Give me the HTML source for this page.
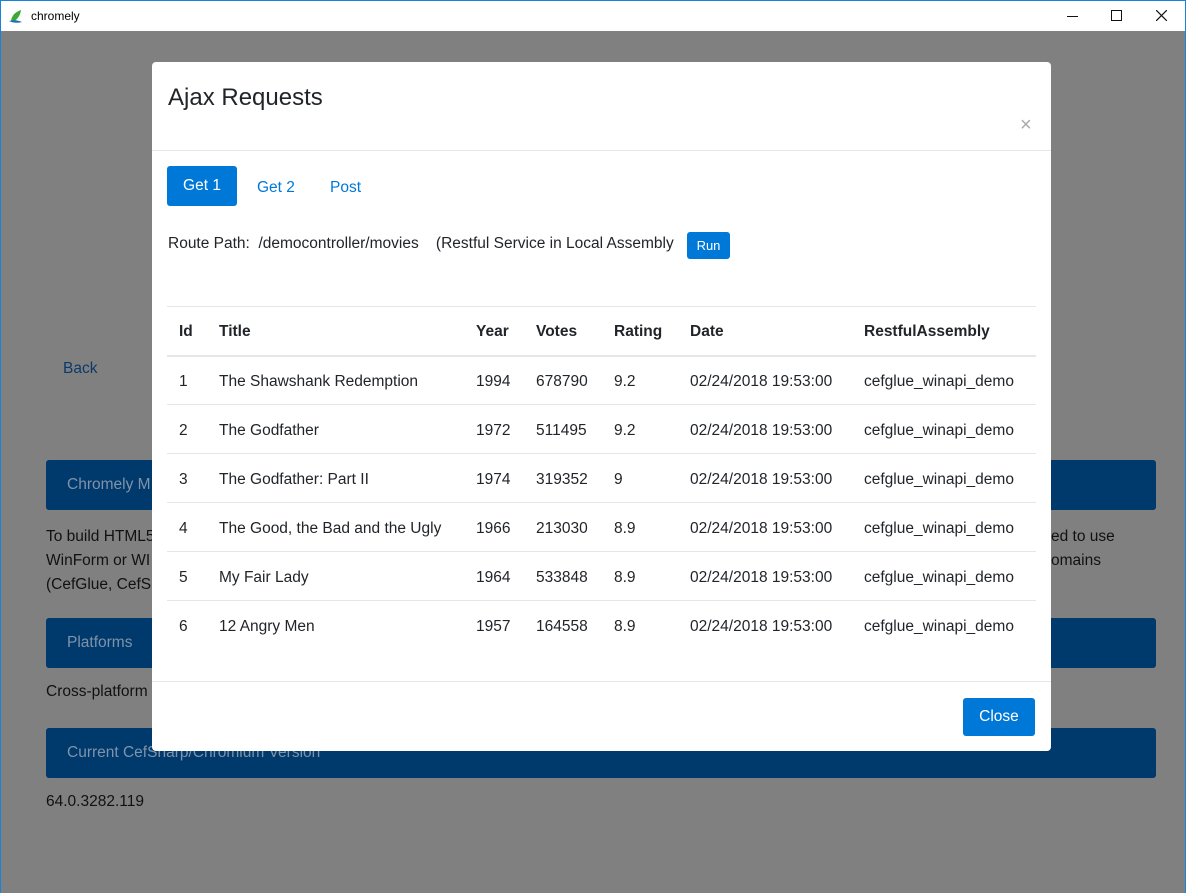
<!DOCTYPE html>
<html><head><style>
*{box-sizing:border-box;margin:0;padding:0}
body{width:1186px;height:893px;overflow:hidden;font-family:"Liberation Sans",sans-serif;position:relative;background:#fff;border:1px solid #1883d7}
.title{position:absolute;left:0;top:0;width:1184px;height:30px;background:#fff;font-size:12px}
.bg{position:absolute;left:0;top:30px;width:1184px;height:862px;background:#808080}
.a{position:absolute;font-size:15.5px;color:#111}
.hd{position:absolute;left:45px;width:1110px;height:50px;background:#00396b;color:#7f93ab;font-size:15.5px;padding:16px 21px;border-radius:3px}
.m{position:absolute;left:151px;top:61px;width:899px;height:689px;background:#fff;border-radius:4px;color:#212529;font-size:15.5px}
table{position:absolute;left:15px;top:244px;width:869px;border-collapse:collapse;table-layout:fixed}
td,th{text-align:left;height:49px;border-top:1px solid #e6e6e6;padding-left:12px;padding-top:3px;font-size:15.5px;white-space:nowrap}
th{border-bottom:2px solid #e6e6e6;height:49px;font-weight:bold}
</style></head><body>
<div class="title">
<svg style="position:absolute;left:8px;top:7px" width="16" height="16"><path d="M2 13 Q3 5 12 2 Q11 10 4 14Z" fill="#3aa935"/><path d="M0 13 Q7 11 13 14 Q6 16 0 13Z" fill="#1b6fb8"/></svg>
<span style="position:absolute;left:30px;top:8px">chromely</span>
<span style="position:absolute;left:1066px;top:15px;width:11px;border-top:1px solid #111"></span>
<span style="position:absolute;left:1110px;top:9px;width:11px;height:11px;border:1px solid #111"></span>
<svg style="position:absolute;left:1155px;top:9px" width="11" height="11"><path d="M0 0L11 11M11 0L0 11" stroke="#111" stroke-width="1.2"/></svg>
</div>
<div class="bg">
<div class="a" style="left:62px;top:329px;color:#0a3a6a">Back</div>
<div class="hd" style="top:429px">Chromely M</div>
<div class="a" style="left:45px;top:494px;line-height:24px">To build HTML5<br>WinForm or WI<br>(CefGlue, CefSh</div>
<div class="a" style="left:1050px;top:494px;line-height:24px">ed to use<br>omains</div>
<div class="hd" style="top:587px">Platforms</div>
<div class="a" style="left:45px;top:652px">Cross-platform</div>
<div class="hd" style="top:697px">Current CefSharp/Chromium Version</div>
<div class="a" style="left:45px;top:762px">64.0.3282.119</div>
</div>
<div class="m">
<div style="position:absolute;left:16px;top:22px;font-size:24px">Ajax Requests</div>
<div style="position:absolute;left:868px;top:52px;font-size:20px;color:#aaa">×</div>
<div style="position:absolute;left:0;top:88px;width:100%;border-top:1px solid #e6e6e6"></div>
<div style="position:absolute;left:15px;top:104px;width:70px;height:40px;background:#0078d7;color:#fff;border-radius:3px;text-align:center;line-height:40px">Get 1</div>
<div style="position:absolute;left:105px;top:117px;color:#0078d7">Get 2</div>
<div style="position:absolute;left:178px;top:117px;color:#0078d7">Post</div>
<div style="position:absolute;left:16px;top:173px;white-space:pre">Route Path:  /democontroller/movies    (Restful Service in Local Assembly</div>
<div style="position:absolute;left:535px;top:170px;width:43px;height:27px;background:#0078d7;color:#fff;border-radius:3px;font-size:13px;text-align:center;line-height:27px">Run</div>
<table>
<colgroup><col style="width:40px"><col style="width:257px"><col style="width:60px"><col style="width:78px"><col style="width:76px"><col style="width:174px"><col></colgroup>
<tr><th>Id</th><th>Title</th><th>Year</th><th>Votes</th><th>Rating</th><th>Date</th><th>RestfulAssembly</th></tr>
<tr><td>1</td><td>The Shawshank Redemption</td><td>1994</td><td>678790</td><td>9.2</td><td>02/24/2018 19:53:00</td><td>cefglue_winapi_demo</td></tr>
<tr><td>2</td><td>The Godfather</td><td>1972</td><td>511495</td><td>9.2</td><td>02/24/2018 19:53:00</td><td>cefglue_winapi_demo</td></tr>
<tr><td>3</td><td>The Godfather: Part II</td><td>1974</td><td>319352</td><td>9</td><td>02/24/2018 19:53:00</td><td>cefglue_winapi_demo</td></tr>
<tr><td>4</td><td>The Good, the Bad and the Ugly</td><td>1966</td><td>213030</td><td>8.9</td><td>02/24/2018 19:53:00</td><td>cefglue_winapi_demo</td></tr>
<tr><td>5</td><td>My Fair Lady</td><td>1964</td><td>533848</td><td>8.9</td><td>02/24/2018 19:53:00</td><td>cefglue_winapi_demo</td></tr>
<tr><td>6</td><td>12 Angry Men</td><td>1957</td><td>164558</td><td>8.9</td><td>02/24/2018 19:53:00</td><td>cefglue_winapi_demo</td></tr>
</table>
<div style="position:absolute;left:0;top:619px;width:100%;border-top:1px solid #e6e6e6"></div>
<div style="position:absolute;left:811px;top:636px;width:72px;height:38px;background:#0078d7;color:#fff;border-radius:3px;text-align:center;line-height:38px">Close</div>
</div>
</body></html>
